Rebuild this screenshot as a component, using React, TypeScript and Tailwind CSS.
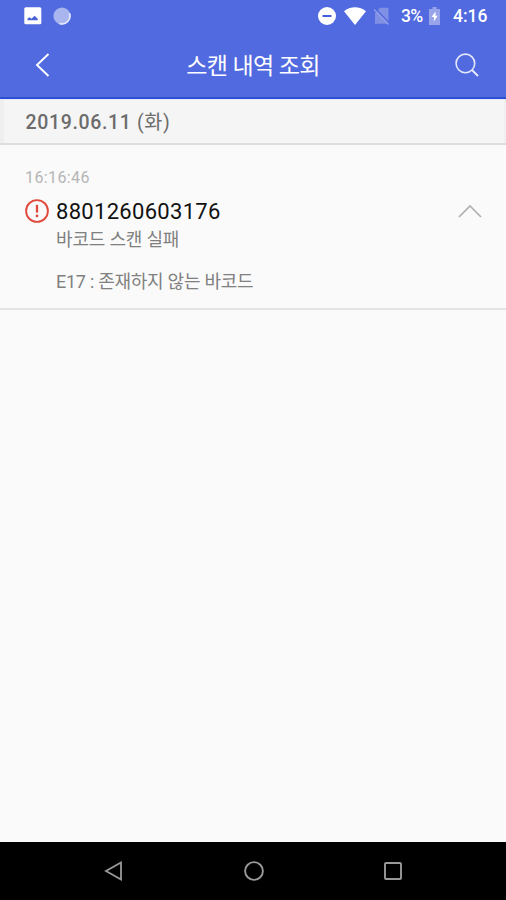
const scans = [
  {
    time: "16:16:46",
    code: "8801260603176",
    status: "바코드 스캔 실패",
    detail: "E17 : 존재하지 않는 바코드",
  },
];

function StatusBar() {
  return (
    <div className="flex h-8 items-center pr-[18px] pl-6 text-white">
      <svg className="h-[18px] w-[18px]" viewBox="0 0 18 18">
        <rect width="17" height="17" x="0.3" y="0.3" rx="1.5" fill="white" />
        <path d="M3.5 13.3V11.5l2-1.3 2 1.5L10.5 8.8l3.2 3v1.5z" fill="#4a62d8" />
      </svg>
      <svg className="ml-[11px] h-[18px] w-[18px]" viewBox="0 0 18 18">
        <circle cx="9" cy="9" r="8.6" fill="#a9b5ee" />
        <path
          d="M16.4 6.2A7.9 7.9 0 0 1 6.5 16.5"
          fill="none"
          stroke="#e6eafb"
          strokeWidth="1.6"
        />
      </svg>

      <div className="ml-auto flex items-center">
        <svg className="h-[18px] w-[18px]" viewBox="0 0 18 18">
          <circle cx="9" cy="9" r="9" fill="white" />
          <path d="M4.5 9h9" stroke="#4660d8" strokeWidth="2" />
        </svg>
        <svg className="ml-2 h-[18px] w-[22px]" viewBox="0 0 22 18">
          <path d="M0 4.2C6.3-1 15.7-1 22 4.2L11 18z" fill="white" />
        </svg>
        <svg className="ml-2 h-[18px] w-4" viewBox="0 0 16 18">
          <path d="M6 .8h8.5v16H1V6z" fill="#8090e5" />
          <path d="M.8 1 15.5 16.3" stroke="#5069de" strokeWidth="1.5" />
          <path d="M0 2.5 14.5 17.5" stroke="#94a1e9" strokeWidth="1.2" />
        </svg>
        <span className="mt-0.5 ml-[11px] w-[23px] text-[17.5px] leading-none font-medium tracking-[-0.8px]">
          3%
        </span>
        <svg className="ml-[5px] h-[18px] w-[11px]" viewBox="0 0 11 18">
          <path d="M3.5 0h4v2H11v16H0V2h3.5z" fill="#97a4ea" />
          <path d="M6.5 4.5 2.5 10h2.4v4.5L8.7 8.8H6.5z" fill="white" />
        </svg>
        <span className="mt-0.5 ml-[13px] w-[35px] text-[17.5px] leading-none font-medium">
          4:16
        </span>
      </div>
    </div>
  );
}

function Header() {
  return (
    <header className="flex h-[67px] items-center justify-between border-b-2 border-[#2f4fd2] pr-[27px] pl-[35px]">
      <button aria-label="뒤로">
        <svg className="h-6 w-[15px]" viewBox="0 0 15 24" fill="none">
          <path d="M13.5 1 2 12l11.5 11" stroke="white" strokeWidth="1.9" />
        </svg>
      </button>
      <h1 className="pt-[3px] pl-px text-[23px] leading-none tracking-[-0.6px] text-white">
        스캔 내역 조회
      </h1>
      <button aria-label="검색">
        <svg className="h-6 w-6" viewBox="0 0 24 24" fill="none">
          <circle cx="10.4" cy="10.4" r="9.3" stroke="#e4e8fb" strokeWidth="1.6" />
          <path d="m17 17 6 6" stroke="#e4e8fb" strokeWidth="1.9" />
        </svg>
      </button>
    </header>
  );
}

function AlertIcon() {
  return (
    <svg className="h-6 w-6" viewBox="0 0 24 24" fill="none">
      <circle cx="12" cy="12" r="10.9" stroke="#e2493d" strokeWidth="1.9" />
      <path d="M12 5.8v7.8" stroke="#e2493d" strokeWidth="2.3" />
      <circle cx="12" cy="16.9" r="1.4" fill="#e2493d" />
    </svg>
  );
}

function NavBar() {
  return (
    <nav className="flex h-[58px] items-center justify-between bg-black px-[104px]">
      <svg className="h-5 w-[19px]" viewBox="0 0 19 20" fill="none">
        <path d="M17 1.5v17L2 10z" stroke="#999" strokeWidth="1.8" />
      </svg>
      <svg className="h-5 w-5" viewBox="0 0 20 20" fill="none">
        <circle cx="10" cy="10" r="8.9" stroke="#999" strokeWidth="1.9" />
      </svg>
      <svg className="h-[18px] w-[18px]" viewBox="0 0 18 18" fill="none">
        <rect x="1" y="1" width="16" height="16" rx="1" stroke="#999" strokeWidth="1.9" />
      </svg>
    </nav>
  );
}

export default function App() {
  return (
    <div className="flex h-[900px] w-[506px] flex-col bg-[#fafafa] font-[Roboto,'Noto_Sans_CJK_KR',sans-serif]">
      <div className="bg-[#516ae0]">
        <StatusBar />
        <Header />
      </div>

      <div className="border-t border-b-2 border-t-[#e0e6fb] border-b-[#dedede]">
        <div className="flex h-[43px] items-center border-r-2 border-l-4 border-[#efefef] bg-[#f5f5f5] pt-0.5 pl-[21.5px]">
          <h2 className="text-[19.5px] leading-none font-medium tracking-[0.65px] text-[#6c6c6c]">
            2019.06.11 <span className="font-normal">(화)</span>
          </h2>
        </div>
      </div>

      <main className="flex-1">
        {scans.map((scan) => (
          <div
            key={scan.time}
            className="h-[165px] border-b-2 border-[#e4e4e4] pt-[23px] pr-6 pl-[25px]"
          >
            <p className="h-[19px] text-[16px] leading-[19px] tracking-[0.4px] text-[#b5b5b5]">
              {scan.time}
            </p>
            <div className="mt-[9px] flex h-[30px] items-center">
              <AlertIcon />
              <span className="ml-[7px] pt-0.5 text-[22px] leading-[30px] tracking-[0.3px] text-[#111]">
                {scan.code}
              </span>
              <svg className="ml-auto h-[14px] w-6" viewBox="0 0 24 14" fill="none">
                <path d="M1 13 12 2l11 11" stroke="#b0b0b0" strokeWidth="1.7" />
              </svg>
            </div>
            <div className="mt-0.5 pl-[31px] text-[18px] tracking-[-0.18px] text-[#808080]">
              <p className="h-6 leading-6">{scan.status}</p>
              <p className="mt-[18px] h-6 leading-6 tracking-[-0.26px]">{scan.detail}</p>
            </div>
          </div>
        ))}
      </main>

      <NavBar />
    </div>
  );
}
